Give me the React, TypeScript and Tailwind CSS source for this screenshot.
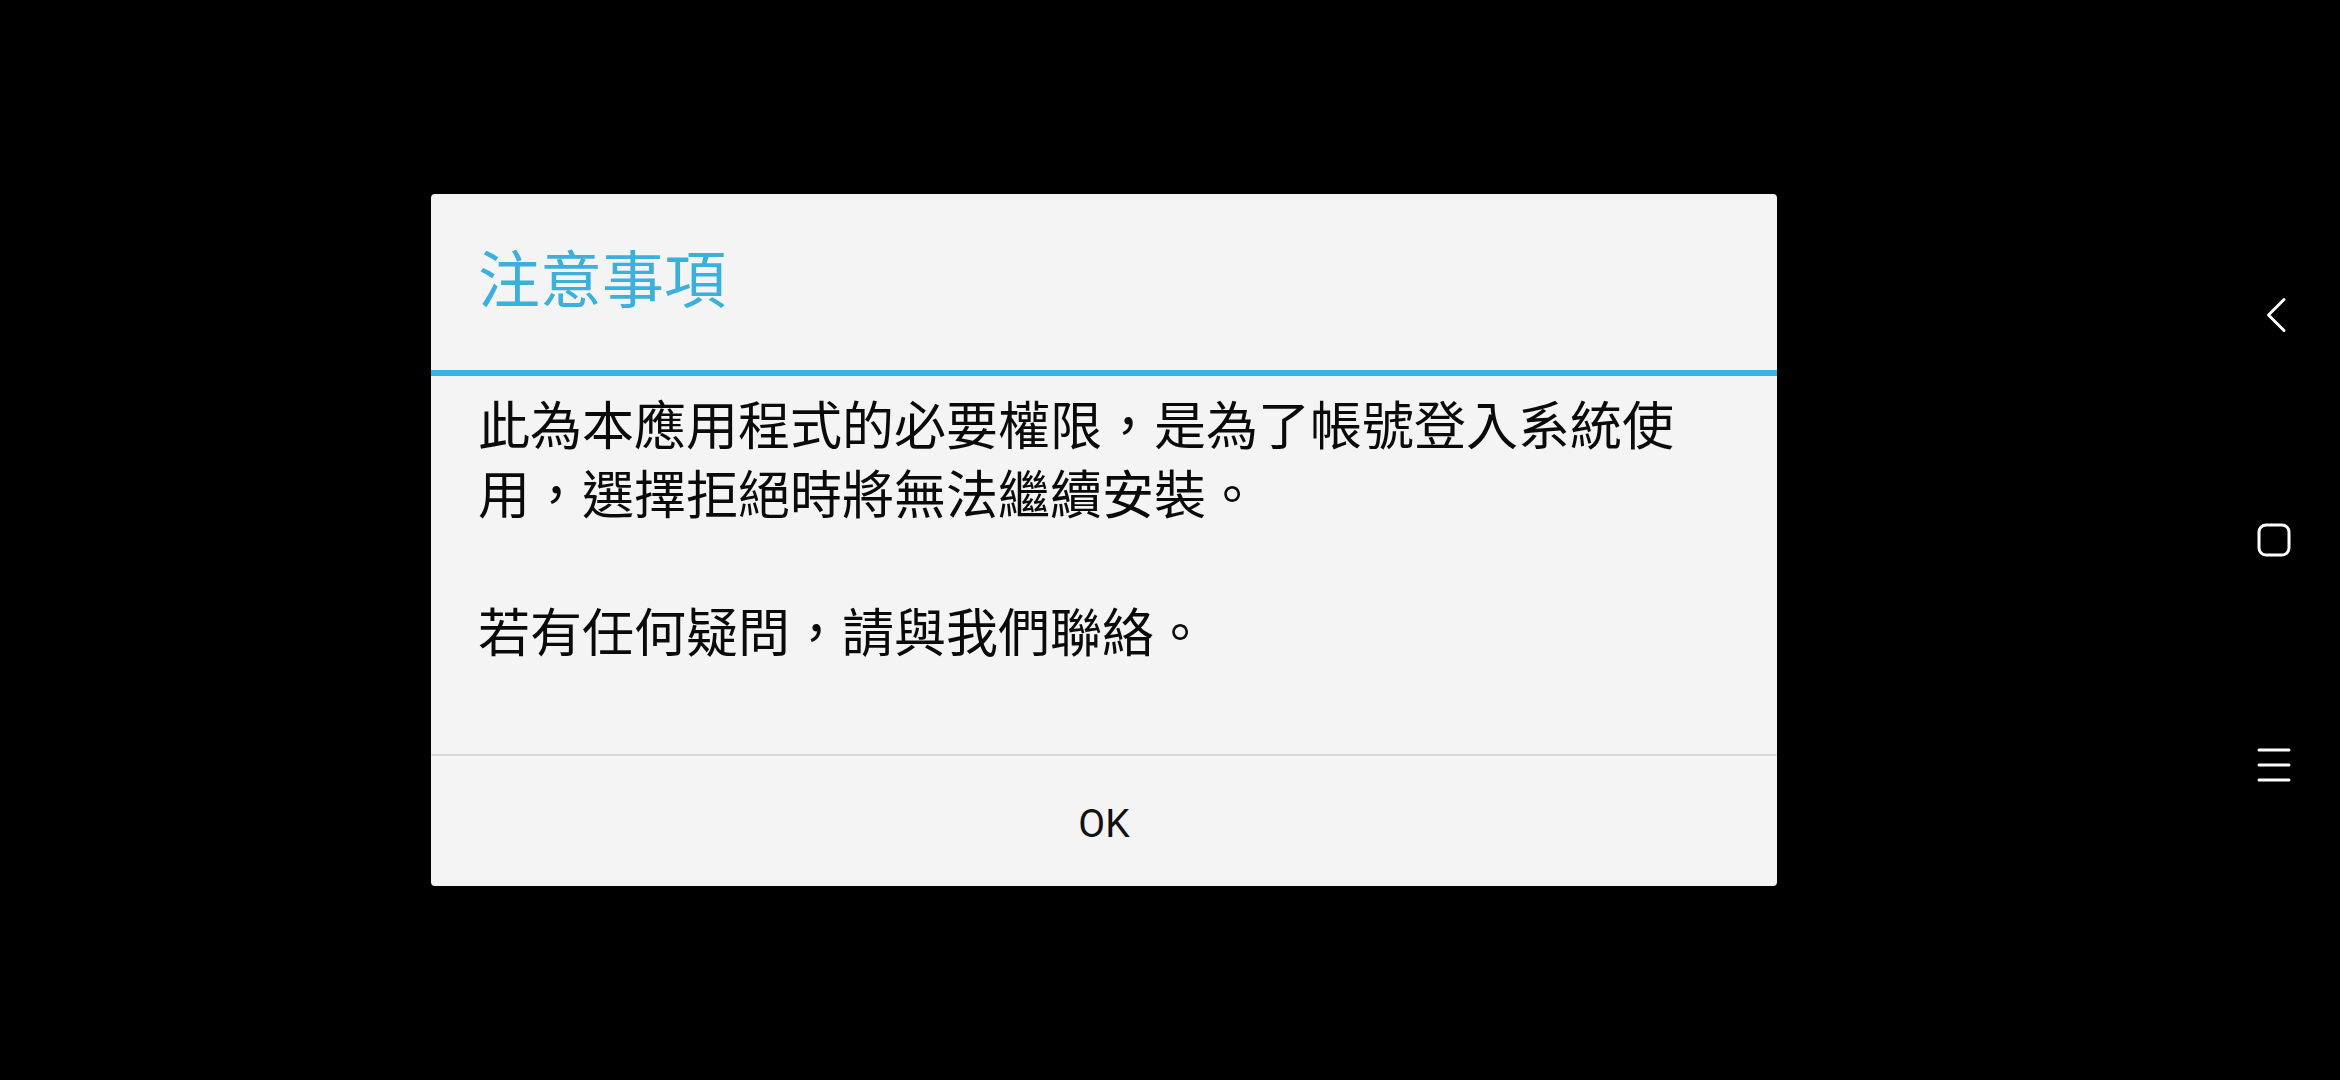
import React from "react";

const cjk = {
  fontFamily:
    '"AR PL UKai TW", "AR PL UKai", "TW-Kai", "Noto Sans CJK TC", "Noto Sans CJK SC", sans-serif',
};

export default function App() {
  return (
    <div className="w-[2340px] h-[1080px] bg-black flex flex-row overflow-hidden">
      <div className="flex-1 flex items-center justify-center">
        <div className="w-[1346px] h-[692px] bg-[#f4f4f4] rounded-[4px] flex flex-col overflow-hidden">
          <div className="h-[176px] flex items-center pl-[47px] pb-[12px] shrink-0">
            <div
              className="text-[62px] leading-none text-[#3cb0dc]"
              style={cjk}
            >
              注意事項
            </div>
          </div>
          <div className="h-[6px] bg-[#3ab4de] shrink-0" />
          <div
            className="flex-1 pt-[12px] pl-[47px] text-[52px] leading-[69px] text-[#0a0a0a]"
            style={cjk}
          >
            <div className="whitespace-nowrap">此為本應用程式的必要權限，是為了帳號登入系統使</div>
            <div className="whitespace-nowrap">用，選擇拒絕時將無法繼續安裝。</div>
            <div className="h-[69px]" />
            <div className="whitespace-nowrap">若有任何疑問，請與我們聯絡。</div>
          </div>
          <div className="h-[2px] bg-[#d9d9d9] shrink-0" />
          <div className="h-[130px] flex items-center justify-center pt-[6px] shrink-0">
            <span
              className="text-[39px] text-[#111111]"
              style={{ fontFamily: 'Roboto, "Noto Sans", sans-serif' }}
            >
              OK
            </span>
          </div>
        </div>
      </div>
      <div className="w-[132px] flex flex-col items-center justify-center">
        <div className="h-[225px] flex items-center justify-center pl-[4px]">
          <svg width="24" height="36" viewBox="0 0 24 36" fill="none">
            <path
              d="M20 2.5 L4.5 18 L20 33.5"
              stroke="white"
              strokeWidth="3"
              strokeLinecap="round"
              strokeLinejoin="round"
            />
          </svg>
        </div>
        <div className="h-[225px] flex items-center justify-center">
          <svg width="34" height="34" viewBox="0 0 34 34" fill="none">
            <rect
              x="2"
              y="2"
              width="30"
              height="30"
              rx="7"
              stroke="white"
              strokeWidth="3"
            />
          </svg>
        </div>
        <div className="h-[225px] flex items-center justify-center">
          <svg width="34" height="34" viewBox="0 0 34 34" fill="none">
            <path
              d="M2 2 H32 M2 17 H32 M2 32 H32"
              stroke="white"
              strokeWidth="3"
              strokeLinecap="round"
            />
          </svg>
        </div>
      </div>
    </div>
  );
}
